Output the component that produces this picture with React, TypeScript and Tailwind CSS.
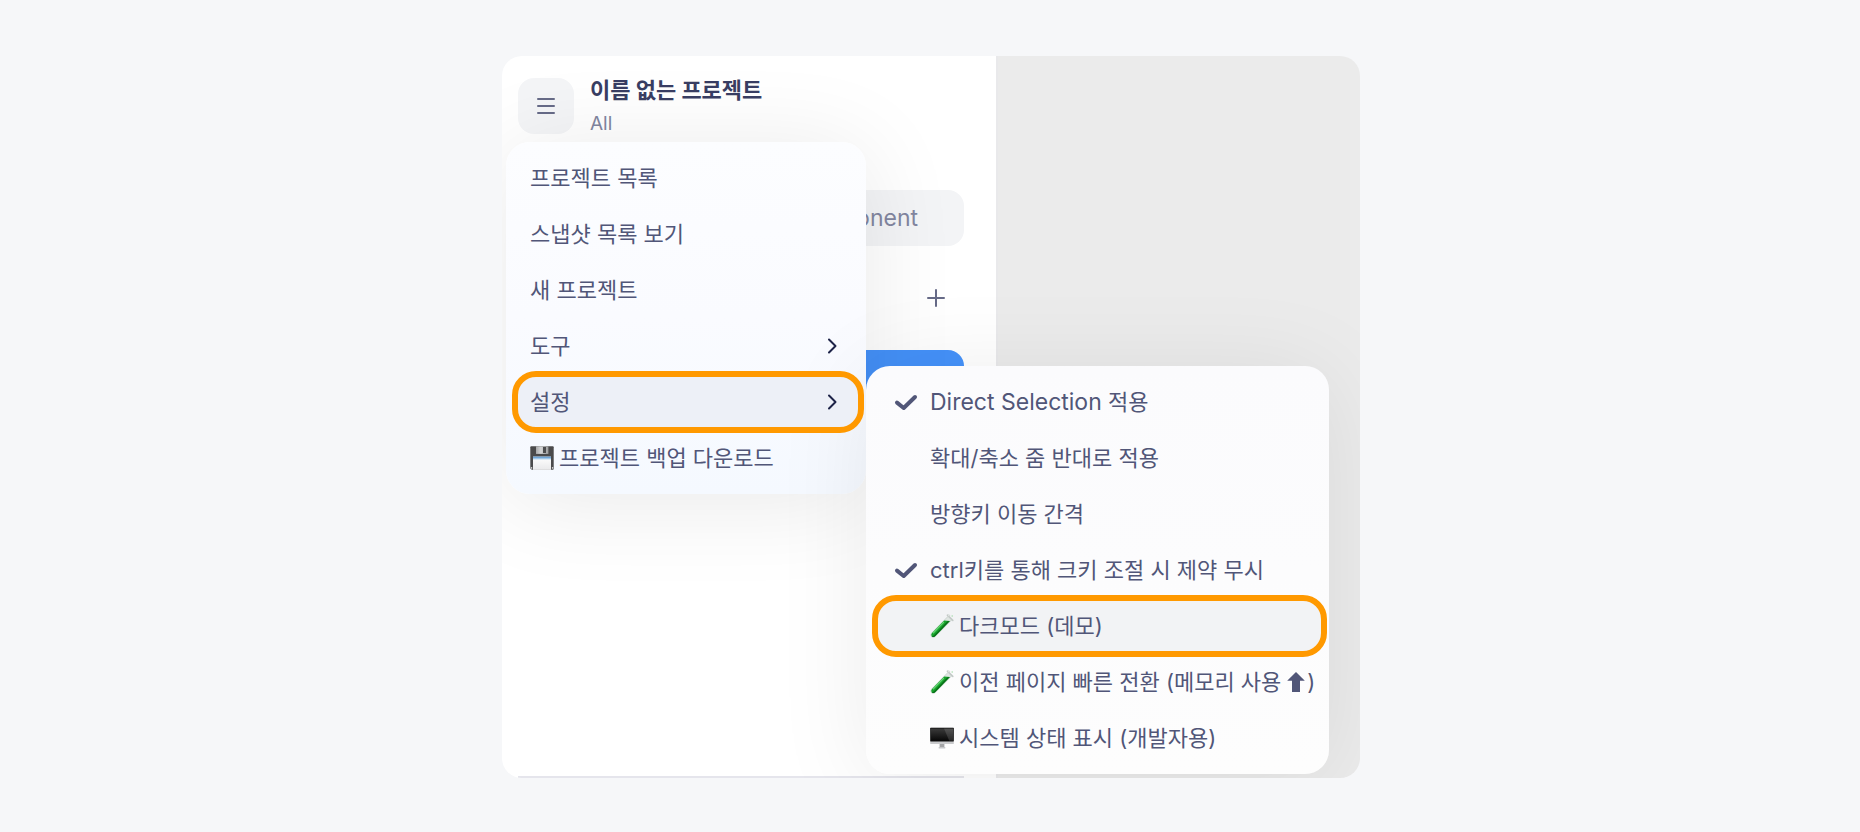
import type { ReactNode } from "react";

function FloppyIcon() {
  return (
    <svg viewBox="0 0 24 24" className="h-6 w-6 shrink-0" aria-hidden="true">
      <defs>
        <linearGradient id="floppy-label" x1="0" y1="0" x2="0" y2="1">
          <stop offset="0" stopColor="#ffffff" />
          <stop offset="1" stopColor="#e9e9ea" />
        </linearGradient>
        <linearGradient id="floppy-metal" x1="0" y1="0" x2="1" y2="0">
          <stop offset="0" stopColor="#a9aaab" />
          <stop offset="0.4" stopColor="#d4d5d6" />
          <stop offset="1" stopColor="#9c9d9e" />
        </linearGradient>
      </defs>
      <path d="M1.2 0.3H22.8Q23.7 0.3 23.7 1.2V23Q23.7 23.8 22.8 23.8H1.9L0.3 22.4V1.2Q0.3 0.3 1.2 0.3Z" fill="#4a4a4b" />
      <rect x="6" y="0.3" width="12.4" height="7.6" fill="url(#floppy-metal)" />
      <rect x="13" y="1" width="3" height="6" fill="#4c4d4f" />
      <rect x="3" y="10.6" width="18" height="13.3" fill="url(#floppy-label)" />
      <rect x="3" y="10.6" width="18" height="2.2" fill="#6fa6d8" />
      <rect x="3" y="12.6" width="18" height="1" fill="#c4dcf1" />
      <rect x="0.8" y="21.2" width="1.4" height="1.4" fill="#e8e8e8" />
      <rect x="21.9" y="21.2" width="1.3" height="1.4" fill="#e8e8e8" />
    </svg>
  );
}

function TestTubeIcon() {
  return (
    <svg viewBox="0 0 24 24" className="h-6 w-6 shrink-0" aria-hidden="true">
      <path d="M18.2 2.2L21.8 5.8L5.2 22.6Q3.2 24.4 1.5 22.7Q0 21 1.6 19.1Z" fill="#dfe6e2" stroke="#b9c2bd" strokeWidth="0.6" />
      <path d="M14.2 6.4L20 7L5.2 22.2Q3.3 23.9 1.8 22.4Q0.5 20.8 2 19Z" fill="#17a32c" />
      <path d="M17.5 7.2L19.8 7.1L5.2 22.1Q3.3 23.7 1.9 22.4Q3.2 22.2 4.4 21Z" fill="#0a6b18" />
      <path d="M13.6 8.4L3.4 18.9" stroke="#6ad878" strokeWidth="1.1" strokeLinecap="round" />
      <path d="M17.4 1.2L22.8 6.4" stroke="#c3cac7" strokeWidth="1.6" strokeLinecap="round" />
      <circle cx="18.8" cy="1.6" r="0.9" fill="#eceeed" stroke="#b9bfbc" strokeWidth="0.4" />
      <circle cx="22.2" cy="2" r="0.8" fill="#a9dcae" />
    </svg>
  );
}

function MonitorIcon() {
  return (
    <svg viewBox="0 0 24 24" className="h-6 w-6 shrink-0" aria-hidden="true">
      <defs>
        <linearGradient id="monitor-screen" x1="0" y1="0" x2="0" y2="1">
          <stop offset="0" stopColor="#3a3a3a" />
          <stop offset="1" stopColor="#080808" />
        </linearGradient>
      </defs>
      <rect x="0.2" y="1.8" width="23.6" height="16.2" rx="0.5" fill="#c9cacc" />
      <rect x="0.2" y="1.8" width="23.6" height="13.6" rx="0.4" fill="#141414" />
      <rect x="1" y="2.6" width="22" height="12.2" fill="url(#monitor-screen)" />
      <path d="M14 2.6H23V14.8H19.2Z" fill="#ffffff" opacity="0.13" />
      <rect x="9.6" y="18" width="4.8" height="3.2" fill="#a4a5a7" />
      <rect x="8.6" y="21" width="6.8" height="1.4" rx="0.4" fill="#c6c7c9" />
    </svg>
  );
}

function UpArrowIcon() {
  return (
    <svg viewBox="0 0 18 22" className="mr-0.5 ml-1.5 inline-block h-[22px] w-[18px] align-[-3px]" role="img" aria-label="증가">
      <path d="M9 1L17.8 9.8H13V21H5V9.8H0.2Z" fill="#515678" />
    </svg>
  );
}

function CheckIcon() {
  return (
    <svg viewBox="0 0 24 24" className="h-6 w-6" fill="none" stroke="#515678" strokeWidth="4" strokeLinecap="round" strokeLinejoin="round" aria-hidden="true">
      <path d="M3 12.6L9.7 18L21 7" />
    </svg>
  );
}

function ChevronIcon() {
  return (
    <svg viewBox="0 0 16 16" className="h-4 w-4" fill="none" stroke="#1d2348" strokeWidth="2" strokeLinecap="round" strokeLinejoin="round" aria-hidden="true">
      <path d="M5 1.5L11.5 8L5 14.5" />
    </svg>
  );
}

type MainItem = { label: string; icon?: ReactNode; submenu?: boolean; active?: boolean };

const mainItems: MainItem[] = [
  { label: "프로젝트 목록" },
  { label: "스냅샷 목록 보기" },
  { label: "새 프로젝트" },
  { label: "도구", submenu: true },
  { label: "설정", submenu: true, active: true },
  { label: "프로젝트 백업 다운로드", icon: <FloppyIcon /> },
];

type SettingItem = { id: string; label: ReactNode; icon?: ReactNode; checked?: boolean; active?: boolean };

const settingItems: SettingItem[] = [
  { id: "direct", label: <><span className="text-[23px]">Direct Selection</span> 적용</>, checked: true },
  { id: "zoom", label: "확대/축소 줌 반대로 적용" },
  { id: "nudge", label: "방향키 이동 간격" },
  { id: "ctrl", label: "ctrl키를 통해 크키 조절 시 제약 무시", checked: true },
  { id: "dark", label: "다크모드 (데모)", icon: <TestTubeIcon />, active: true },
  { id: "cache", label: <>이전 페이지 빠른 전환 (메모리 사용<UpArrowIcon />)</>, icon: <TestTubeIcon /> },
  { id: "status", label: "시스템 상태 표시 (개발자용)", icon: <MonitorIcon /> },
];

function Highlight() {
  return <span className="pointer-events-none absolute -inset-y-[3px] -right-1.5 -left-0.5 rounded-3xl border-6 border-[#ff9900]" />;
}

function MainMenu() {
  return (
    <div role="menu" className="w-[360px] shrink-0 self-start rounded-3xl bg-linear-to-b from-[#fcfdff] via-[#fafbff] to-[#f5f9ff] p-2 shadow-[0_8px_96px_rgba(0,0,0,0.09)]">
      {mainItems.map((item) => (
        <button
          key={item.label}
          type="button"
          role="menuitem"
          aria-haspopup={item.submenu ? "menu" : undefined}
          aria-expanded={item.submenu ? Boolean(item.active) : undefined}
          className={
            item.active
              ? "relative flex h-14 w-full items-center rounded-2xl bg-[#edf0f7] px-4 text-left"
              : "relative flex h-14 w-full items-center rounded-2xl px-4 text-left"
          }
        >
          {item.icon && <span className="mr-[5px]">{item.icon}</span>}
          <span className="flex-1 whitespace-nowrap">{item.label}</span>
          {item.submenu && <span className="mr-0.5"><ChevronIcon /></span>}
          {item.active && <Highlight />}
        </button>
      ))}
    </div>
  );
}

function SettingsMenu() {
  return (
    <div role="menu" aria-label="설정" className="mt-56 mb-1 w-[463px] shrink-0 rounded-3xl bg-linear-to-b from-[#fbfbfd] to-[#fdfdfd] p-2 shadow-[0_8px_96px_rgba(0,0,0,0.08)]">
      {settingItems.map((item) => (
        <button
          key={item.id}
          type="button"
          role="menuitemcheckbox"
          aria-checked={Boolean(item.checked)}
          className={
            item.active
              ? "relative flex h-14 w-full items-center rounded-2xl bg-[#f2f3f5] pl-5 text-left"
              : "relative flex h-14 w-full items-center rounded-2xl pl-5 text-left"
          }
        >
          <span className="mr-3 w-6">{item.checked && <CheckIcon />}</span>
          {item.icon && <span className="mr-[5px]">{item.icon}</span>}
          <span className="whitespace-nowrap">{item.label}</span>
          {item.active && <Highlight />}
        </button>
      ))}
    </div>
  );
}

function SidePanel() {
  return (
    <section className="flex w-[494px] shrink-0 flex-col bg-white px-4 pt-[22px]">
      <header className="flex h-14 items-center gap-4">
        <button type="button" aria-label="메뉴" className="flex h-14 w-14 items-center justify-center rounded-2xl bg-[#f4f5f7]">
          <svg viewBox="0 0 20 20" className="h-5 w-5" fill="none" stroke="#676b88" strokeWidth="2" strokeLinecap="round" aria-hidden="true">
            <path d="M2 3H18M2 10H18M2 17H18" />
          </svg>
        </button>
        <div>
          <h1 className="text-[22px] leading-8 font-bold text-[#393e63]">이름 없는 프로젝트</h1>
          <p className="mt-1 text-[19px] leading-7 text-[#8286a0]">All</p>
        </div>
      </header>
      <div className="mt-14 mr-4 flex h-14 items-center justify-end rounded-2xl bg-[#f3f4f6]">
        <button type="button" className="pr-[46px] text-[23px] text-[#8286a0]">Component</button>
      </div>
      <div className="mt-10 mr-8 flex justify-end">
        <button type="button" aria-label="추가" className="p-0.5">
          <svg viewBox="0 0 20 20" className="h-5 w-5" fill="none" stroke="#676b88" strokeWidth="2" strokeLinecap="round" aria-hidden="true">
            <path d="M10 2V18M2 10H18" />
          </svg>
        </button>
      </div>
      <div className="mt-10 mr-4 h-14 rounded-2xl bg-[#4592fa]" />
      <div className="mt-auto mr-4 h-0.5 bg-[#e5e5ec]" />
    </section>
  );
}

export default function App() {
  return (
    <main className="flex min-h-screen items-center justify-center bg-[#f6f7f9] pt-14 pb-[54px] pl-0.5 font-['Inter','Noto_Sans_CJK_KR',sans-serif] text-[22px] text-[#515678]">
      <div className="grid w-full max-w-[858px] overflow-hidden rounded-[20px]">
        <div className="flex [grid-area:1/1]">
          <SidePanel />
          <div className="flex-1 border-l-2 border-[#e9e9eb] bg-[#ebebeb]" />
        </div>
        <div className="flex items-start pt-[86px] pl-1 [grid-area:1/1]">
          <MainMenu />
          <SettingsMenu />
        </div>
      </div>
    </main>
  );
}
